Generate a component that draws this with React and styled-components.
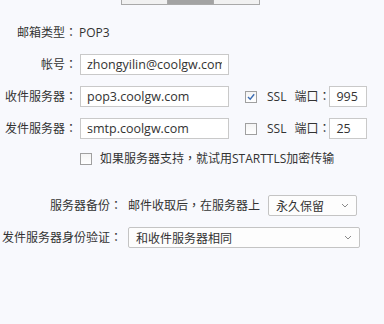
import styled, { createGlobalStyle } from "styled-components";

const FONT = `"Open Sans", "Noto Sans CJK TC", "Noto Sans CJK SC", sans-serif`;

const GlobalStyle = createGlobalStyle`
	html, body {
		margin: 0;
		padding: 0;
		background: #f8f9fd;
	}
	body {
		font-family: ${FONT};
		font-size: 12px;
		color: #333;
	}
`;

const Page = styled.div`
	width: 384px;
	height: 324px;
	overflow: hidden;
	background: #f8f9fd;
`;

const Tabs = styled.div`
	display: flex;
	margin-left: 121px;
	margin-top: -17px;
	width: 139px;
`;

const Tab = styled.div`
	flex: 1;
	height: 20px;
	background: ${(p) => (p.$active ? "#a3a3a3" : "#f1f1f1")};
	border: 1px solid #a9a9a9;
	border-left-width: ${(p) => (p.$first ? "1px" : "0")};
`;

const Section = styled.div`
	display: flex;
	flex-direction: column;
	gap: 11px;
	margin-top: ${(p) => p.$top}px;
`;

const Row = styled.div`
	display: flex;
	align-items: center;
	height: ${(p) => p.$h || 21}px;
`;

const Label = styled.div`
	width: ${(p) => p.$w}px;
	flex-shrink: 0;
	text-align: right;
	white-space: nowrap;
	margin-right: ${(p) => p.$gap}px;
	line-height: 21px;
`;

const Value = styled.span`
	line-height: 21px;
	white-space: nowrap;
`;

const TextInput = styled.input`
	box-sizing: border-box;
	width: ${(p) => p.$w}px;
	height: 21px;
	margin: 0;
	padding: 0 6px;
	border: 1px solid #c9c9c9;
	background: #fff;
	font-family: ${FONT};
	font-size: 12.5px;
	color: #333;
	outline: none;
`;

const Check = styled.span`
	box-sizing: border-box;
	display: inline-flex;
	align-items: center;
	justify-content: center;
	width: 12px;
	height: 12px;
	border: 1px solid #a0a0a0;
	background: linear-gradient(#f4f4f4, #ffffff);
	margin-left: ${(p) => p.$ml || 0}px;
	margin-right: ${(p) => p.$mr || 0}px;
	flex-shrink: 0;
`;

const Port = styled.span`
	margin-left: 8px;
	white-space: nowrap;
	line-height: 21px;
	margin-right: -1px;
`;

const Select = styled.div`
	box-sizing: border-box;
	display: flex;
	align-items: center;
	justify-content: space-between;
	width: ${(p) => p.$w}px;
	height: 21px;
	margin-left: ${(p) => p.$ml || 0}px;
	padding: 0 7px;
	border: 1px solid #c4c4c4;
	border-radius: 2px;
	background: #fdfdfd;
	white-space: nowrap;
`;

const Chevron = () => (
	<svg width="8" height="5" viewBox="0 0 8 5">
		<polyline points="1,1 4,4 7,1" fill="none" stroke="#8a8a8a" strokeWidth="1" />
	</svg>
);

const Tick = () => (
	<svg width="10" height="10" viewBox="0 0 10 10">
		<polyline points="2,5 4.2,7.3 8.2,2.3" fill="none" stroke="#3b6cb3" strokeWidth="1.4" />
	</svg>
);

export default function App() {
	return (
		<Page>
			<GlobalStyle />
			<Tabs>
				<Tab $first />
				<Tab $active />
				<Tab />
			</Tabs>

			<Section $top={17}>
				<Row>
					<Label $w={77} $gap={2}>邮箱类型：</Label>
					<Value>POP3</Value>
				</Row>
				<Row>
					<Label $w={77} $gap={3}>帐号：</Label>
					<TextInput $w={149} readOnly value="zhongyilin@coolgw.com" />
				</Row>
				<Row>
					<Label $w={77} $gap={3}>收件服务器：</Label>
					<TextInput $w={149} readOnly value="pop3.coolgw.com" />
					<Check $ml={16} $mr={10}>
						<Tick />
					</Check>
					<Value>SSL</Value>
					<Port>端口：</Port>
					<TextInput $w={38} readOnly value="995" />
				</Row>
				<Row>
					<Label $w={77} $gap={3}>发件服务器：</Label>
					<TextInput $w={149} readOnly value="smtp.coolgw.com" />
					<Check $ml={16} $mr={10} />
					<Value>SSL</Value>
					<Port>端口：</Port>
					<TextInput $w={38} readOnly value="25" />
				</Row>
				<Row $h={17}>
					<Check $ml={80} $mr={8} />
					<Value>如果服务器支持，就试用STARTTLS加密传输</Value>
				</Row>
			</Section>

			<Section $top={28}>
				<Row>
					<Label $w={122} $gap={6}>服务器备份：</Label>
					<Value>邮件收取后，在服务器上</Value>
					<Select $w={89} $ml={8}>
						<span>永久保留</span>
						<Chevron />
					</Select>
				</Row>
				<Row>
					<Label $w={122} $gap={6}>发件服务器身份验证：</Label>
					<Select $w={232}>
						<span>和收件服务器相同</span>
						<Chevron />
					</Select>
				</Row>
			</Section>
		</Page>
	);
}
